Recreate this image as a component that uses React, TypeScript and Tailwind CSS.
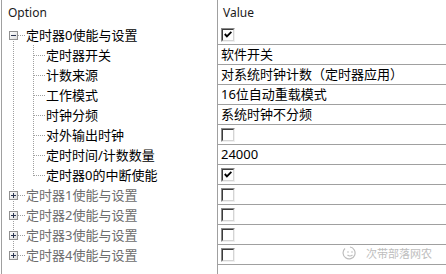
import React from 'react';

const LINE = '#a0a0a0';

type Kind = 'root-open' | 'child' | 'child-last' | 'root' | 'root-last';

type Row = {
  label: string;
  kind: Kind;
  value?: string;
  check?: boolean;
  dim?: boolean;
};

const rows: Row[] = [
  { label: '定时器0使能与设置', kind: 'root-open', check: true },
  { label: '定时器开关', kind: 'child', value: '软件开关' },
  { label: '计数来源', kind: 'child', value: '对系统时钟计数（定时器应用）' },
  { label: '工作模式', kind: 'child', value: '16位自动重载模式' },
  { label: '时钟分频', kind: 'child', value: '系统时钟不分频' },
  { label: '对外输出时钟', kind: 'child', check: false },
  { label: '定时时间/计数数量', kind: 'child', value: '24000' },
  { label: '定时器0的中断使能', kind: 'child-last', check: true },
  { label: '定时器1使能与设置', kind: 'root', check: false, dim: true },
  { label: '定时器2使能与设置', kind: 'root', check: false, dim: true },
  { label: '定时器3使能与设置', kind: 'root', check: false, dim: true },
  { label: '定时器4使能与设置', kind: 'root-last', check: false, dim: true },
];

function Dots({ x1, y1, x2, y2 }: { x1: number; y1: number; x2: number; y2: number }) {
  return (
    <line
      x1={x1}
      y1={y1}
      x2={x2}
      y2={y2}
      stroke={LINE}
      strokeWidth={1}
      strokeDasharray="1 1"
      shapeRendering="crispEdges"
    />
  );
}

function Expander({ open }: { open: boolean }) {
  return (
    <g shapeRendering="crispEdges">
      <rect x={7.5} y={6.5} width={8} height={8} fill="url(#boxfill)" stroke="#919191" />
      <line x1={9} y1={10.5} x2={14} y2={10.5} stroke="#2a3550" />
      {!open && <line x1={11.5} y1={8} x2={11.5} y2={13} stroke="#2a3550" />}
    </g>
  );
}

// tree connectors for one row, coordinates start at the left column content edge
function TreeGutter({ kind }: { kind: Kind }) {
  const isChild = kind === 'child' || kind === 'child-last';
  const w = isChild ? 44 : 24;
  return (
    <svg width={w} height={20} className="shrink-0 block">
      <defs>
        <linearGradient id="boxfill" x1="0" y1="0" x2="1" y2="1">
          <stop offset="0" stopColor="#ffffff" />
          <stop offset="1" stopColor="#dcdcdc" />
        </linearGradient>
      </defs>
      {isChild && (
        <>
          <Dots x1={11.5} y1={0} x2={11.5} y2={20} />
          <Dots x1={31.5} y1={0} x2={31.5} y2={kind === 'child-last' ? 11 : 20} />
          <Dots x1={32} y1={10.5} x2={44} y2={10.5} />
        </>
      )}
      {!isChild && (
        <>
          {kind !== 'root-open' && <Dots x1={11.5} y1={0} x2={11.5} y2={6} />}
          {kind !== 'root-last' && <Dots x1={11.5} y1={16} x2={11.5} y2={20} />}
          <Dots x1={16} y1={10.5} x2={24} y2={10.5} />
          <Expander open={kind === 'root-open'} />
        </>
      )}
    </svg>
  );
}

function CheckBox({ on }: { on: boolean }) {
  return (
    <span className="flex w-[14px] h-[14px] border border-[#8a8a8a] border-r-[#f0f0f0] border-b-[#f0f0f0]">
      <span className="flex flex-1 items-center justify-center border border-[#3c3c3c] border-r-[#d4d4d4] border-b-[#d4d4d4] bg-white">
        {on && (
          <svg width="8" height="7" viewBox="0 0 8 7" className="block">
            <path d="M0.8 3 L2.9 5.3 L7.4 0.8" fill="none" stroke="#000" strokeWidth={1.9} />
          </svg>
        )}
      </span>
    </span>
  );
}

export default function App() {
  return (
    <div className="relative flex w-[446px] h-[274px] bg-white overflow-hidden font-['Noto_Sans','Noto_Sans_CJK_SC',sans-serif] text-black">
      {/* Option column */}
      <div className="ml-px w-[216px] border-l border-[#a0a0a0] flex flex-col">
        <div className="h-[25px] flex items-center pl-[6px] text-[12px] text-[#1a1a1a]">Option</div>
        {rows.map((r, i) => (
          <div key={i} className="h-[20px] flex items-center">
            <TreeGutter kind={r.kind} />
            <span
              className={`text-[13px] leading-[20px] whitespace-nowrap ${r.dim ? 'text-[#6d6d6d]' : 'text-black'}`}
            >
              {r.label}
            </span>
          </div>
        ))}
      </div>

      {/* Value column */}
      <div className="flex-1 border-l border-[#a0a0a0] flex flex-col">
        <div className="h-[25px] flex items-center pl-[5px] text-[12px] text-[#1a1a1a]">Value</div>
        {rows.map((r, i) => (
          <div key={i} className="h-[20px] border-b border-[#a0a0a0] flex items-center pl-[3px]">
            {r.value !== undefined ? (
              <span className="text-[13px] leading-[19px] whitespace-nowrap">{r.value}</span>
            ) : (
              <CheckBox on={!!r.check} />
            )}
          </div>
        ))}
      </div>

      {/* watermark */}
      <div className="absolute left-[342px] top-[246px] flex items-center gap-[8px] text-[#bdbdbd] pointer-events-none">
        <svg width="16" height="14" viewBox="0 0 16 14" fill="none" stroke="#bdbdbd" strokeWidth={1.2}>
          <path d="M3 2.5 A6 6 0 1 0 8 1" />
          <circle cx="6" cy="6" r="0.8" fill="#bdbdbd" stroke="none" />
          <circle cx="10" cy="6" r="0.8" fill="#bdbdbd" stroke="none" />
          <path d="M5.5 9 Q8 11 10.5 9" />
        </svg>
        <span className="text-[11px] leading-none whitespace-nowrap">次带部落网农</span>
      </div>
    </div>
  );
}
